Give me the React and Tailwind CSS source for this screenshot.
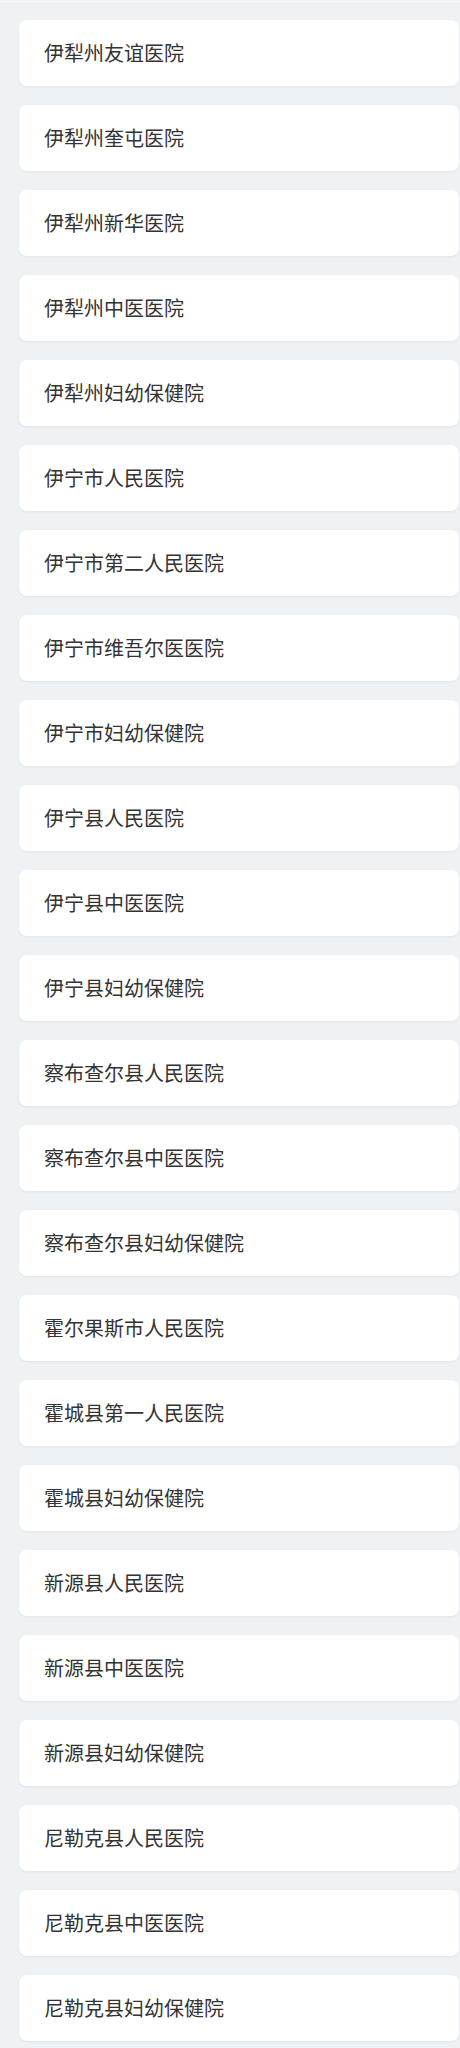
import React from 'react';

const hospitals = [
  '伊犁州友谊医院',
  '伊犁州奎屯医院',
  '伊犁州新华医院',
  '伊犁州中医医院',
  '伊犁州妇幼保健院',
  '伊宁市人民医院',
  '伊宁市第二人民医院',
  '伊宁市维吾尔医医院',
  '伊宁市妇幼保健院',
  '伊宁县人民医院',
  '伊宁县中医医院',
  '伊宁县妇幼保健院',
  '察布查尔县人民医院',
  '察布查尔县中医医院',
  '察布查尔县妇幼保健院',
  '霍尔果斯市人民医院',
  '霍城县第一人民医院',
  '霍城县妇幼保健院',
  '新源县人民医院',
  '新源县中医医院',
  '新源县妇幼保健院',
  '尼勒克县人民医院',
  '尼勒克县中医医院',
  '尼勒克县妇幼保健院',
];

const App = () => {
  return (
    <div
      className="min-h-screen bg-[#eef2f5]"
      style={{ fontFamily: '"Noto Sans CJK SC", "Noto Sans", sans-serif' }}
    >
      {/* top edge */}
      <div className="h-[4px] bg-[#f4f6f8] border-b border-[#e8ecef]" />

      <div className="flex flex-col gap-[19px] pt-[16px] pl-[19px] pr-[1px]">
        {hospitals.map((name) => (
          <div
            key={name}
            className="h-[66px] flex items-center pl-[25px] bg-white rounded-[8px] shadow-[0_1px_3px_rgba(0,0,0,0.06)]"
          >
            <span className="text-[20px] text-[#333] leading-none">{name}</span>
          </div>
        ))}
      </div>
    </div>
  );
};

export default App;
